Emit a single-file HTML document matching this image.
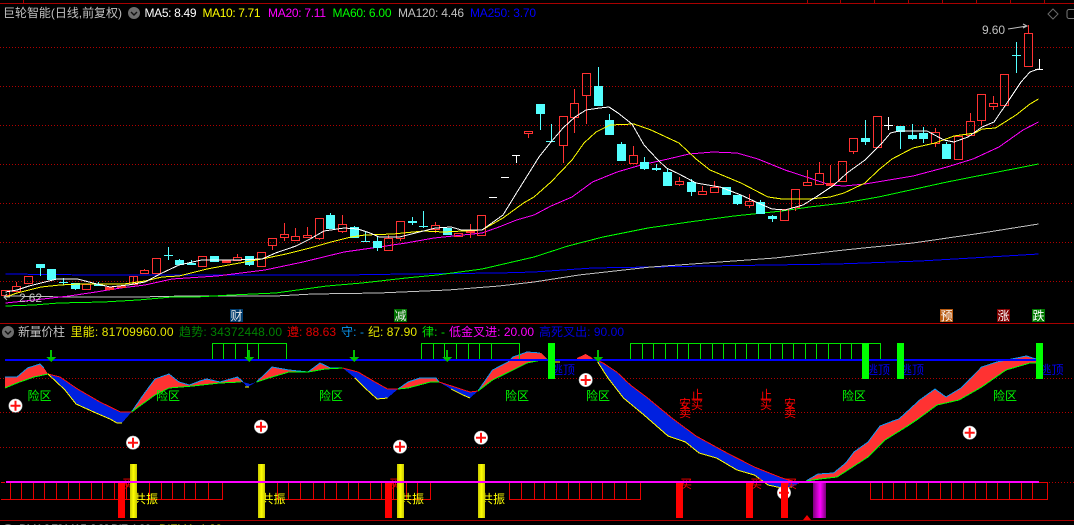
<!DOCTYPE html>
<html><head><meta charset="utf-8"><title>K</title>
<style>
html,body{margin:0;padding:0;background:#000;width:1074px;height:525px;overflow:hidden}
svg{display:block}
text{font-family:"Liberation Sans","WenQuanYi Zen Hei","Noto Sans CJK SC",sans-serif;font-size:12px}
</style></head><body>
<svg width="1074" height="525" viewBox="0 0 1074 525" xmlns="http://www.w3.org/2000/svg">
<rect width="1074" height="525" fill="#000"/>
<g shape-rendering="crispEdges">
<path d="M0 3.5H1074M23.5 0V3M807.5 0V3M840.5 0V3M874.5 0V3M908.5 0V3M942.5 0V3M976.5 0V3M1010.5 0V3M1044.5 0V3M0 323.5H1074M0 520.5H1074" stroke="#a80000" fill="none"/>
<path d="M0 47.5H1074M0 86.5H1074M0 125.5H1074M0 164.5H1074M0 203.5H1074M0 242.5H1074M0 281.5H1074M0 378.5H1074M0 412.5H1074M0 447.5H1074M1040 482.5H1074" stroke="#b00000" stroke-dasharray="1 2" fill="none"/>
</g>

<!-- MA lines -->
<g fill="none" shape-rendering="crispEdges">
<polyline stroke="#0000ff" points="5.5,274 93,275 275.5,275 344,275 406,274 499,273 534,272 592.5,268 651,267 706,266 837,264 920,261 989,257 1038.5,254"/>
<polyline stroke="#c0c0c0" points="5.5,296 69,297 138,297 186,296 275.5,296 313,294 379,293 448,290 499,286 534,282 579,275 651,267 706,263 775,258 844,250 913,243 982,233 1038.5,224"/>
<polyline stroke="#00ff00" points="5.5,306 34,305 58.5,303 103,302 138,300 172,297 196,297 231,295 275.5,293 327,286 362,283 406,278 437,275 482,269 534,257 568,246 603,237 648,228 689,222 734,216 782,211 809.5,207 844,203 878.5,197 947,182 1038.5,164"/>
<polyline stroke="#ff00ff" points="5.5,303 34,300 69,296 96,292 120.5,288 145,285 172,279 217,276 265,270 303,262 344,252 379,247 406,243 434,238 482,233 499,227 516.5,220 534,215 551,206 572,197 592.5,182 617,172 641,165 668,159 689,154 713,152 737,153 758,159 785,170 809.5,178 830,185 844,186 865,184 913,176 947,167 973,159 999,147 1023,130 1038.5,122"/>
</g>

<!-- candles: red hollow -->
<g fill="none" stroke="#ff3232" shape-rendering="crispEdges">
<path d="M16.5 282V286M28.5 283V284M144.5 269V270M144.5 273V274M237.5 254V257M272.5 245V250M284.5 223V234M284.5 237V241M295.5 228V236M307.5 227V235M319.5 238V240M342.5 215V224M342.5 231V233M388.5 235V238M388.5 250V251M400.5 238V241M435.5 222V225M435.5 229V233M470.5 224V238M133.5 276V285M528.5 133V138M563.5 145V163M574.5 89V103M574.5 117V133M586.5 95V124M633.5 146V155M633.5 163V164M679.5 177V181M679.5 184V186M702.5 186V191M714.5 181V187M749.5 194V201M749.5 205V208M795.5 207V211M807.5 170V182M819.5 162V173M830.5 165V183M853.5 151V154M935.5 128V132M935.5 143V147M970.5 113V121M981.5 120V125M993.5 96V103M993.5 106V110M1028.5 25V33"/>
<rect x="1.5" y="290.5" width="8" height="5"/><rect x="12.5" y="286.5" width="8" height="5"/><rect x="24.5" y="276.5" width="8" height="7"/><rect x="82.5" y="284.5" width="8" height="5"/><rect x="129.5" y="276.5" width="8" height="8"/><rect x="140.5" y="270.5" width="8" height="3"/><rect x="152.5" y="258.5" width="8" height="15"/><rect x="198.5" y="256.5" width="8" height="10"/><rect x="233.5" y="257.5" width="8" height="3"/><rect x="257.5" y="252.5" width="8" height="14"/><rect x="268.5" y="238.5" width="8" height="7"/><rect x="280.5" y="234.5" width="8" height="3"/><rect x="291.5" y="236.5" width="8" height="4"/><rect x="303.5" y="235.5" width="8" height="2"/><rect x="315.5" y="218.5" width="8" height="20"/><rect x="338.5" y="224.5" width="8" height="7"/><rect x="384.5" y="238.5" width="8" height="12"/><rect x="396.5" y="221.5" width="8" height="17"/><rect x="431.5" y="225.5" width="8" height="4"/><rect x="454.5" y="233.5" width="8" height="3"/><rect x="477.5" y="215.5" width="8" height="20"/><rect x="524.5" y="131.5" width="8" height="2"/>
<rect x="559.5" y="116.5" width="8" height="29"/><rect x="570.5" y="103.5" width="8" height="14"/><rect x="582.5" y="73.5" width="8" height="22"/><rect x="629.5" y="155.5" width="8" height="8"/><rect x="675.5" y="181.5" width="8" height="3"/><rect x="698.5" y="191.5" width="8" height="3"/><rect x="710.5" y="187.5" width="8" height="5"/><rect x="745.5" y="201.5" width="8" height="4"/><rect x="780.5" y="209.5" width="8" height="11"/><rect x="791.5" y="189.5" width="8" height="18"/><rect x="803.5" y="182.5" width="8" height="3"/><rect x="815.5" y="173.5" width="8" height="11"/><rect x="838.5" y="161.5" width="8" height="20"/><rect x="849.5" y="138.5" width="8" height="13"/><rect x="873.5" y="116.5" width="8" height="31"/><rect x="931.5" y="132.5" width="8" height="11"/><rect x="954.5" y="136.5" width="8" height="23"/><rect x="966.5" y="121.5" width="8" height="14"/><rect x="977.5" y="94.5" width="8" height="26"/><rect x="989.5" y="103.5" width="8" height="3"/><rect x="1000.5" y="74.5" width="8" height="31"/><rect x="1024.5" y="33.5" width="8" height="33"/>
</g>
<g fill="#ff3232" shape-rendering="crispEdges">
<rect x="105" y="287" width="9" height="3"/><rect x="117" y="286" width="9" height="2"/><rect x="222" y="260" width="9" height="3"/><rect x="826" y="183" width="9" height="3"/><rect x="466" y="231" width="9" height="2"/>
</g>
<!-- candles: cyan -->
<g fill="#54ffff" shape-rendering="crispEdges">
<rect x="36" y="264" width="9" height="4"/><rect x="47" y="269" width="9" height="11"/><rect x="71" y="283" width="9" height="6"/><rect x="94" y="284" width="9" height="2"/><rect x="175" y="260" width="9" height="5"/><rect x="187" y="263" width="9" height="2"/><rect x="210" y="256" width="9" height="6"/><rect x="245" y="256" width="9" height="9"/><rect x="326" y="215" width="9" height="14"/><rect x="350" y="227" width="9" height="11"/><rect x="373" y="241" width="9" height="7"/><rect x="408" y="221" width="9" height="2"/><rect x="443" y="228" width="9" height="7"/>
<rect x="536" y="104" width="9" height="10"/><rect x="594" y="86" width="9" height="20"/><rect x="605" y="120" width="9" height="15"/><rect x="617" y="144" width="9" height="17"/><rect x="640" y="162" width="9" height="7"/><rect x="652" y="168" width="9" height="2"/><rect x="663" y="172" width="9" height="14"/><rect x="687" y="182" width="9" height="10"/><rect x="722" y="187" width="9" height="8"/><rect x="733" y="195" width="9" height="9"/><rect x="756" y="202" width="9" height="12"/><rect x="768" y="216" width="9" height="3"/><rect x="861" y="138" width="9" height="4"/><rect x="896" y="126" width="9" height="6"/><rect x="908" y="135" width="9" height="4"/><rect x="919" y="133" width="9" height="6"/><rect x="942" y="144" width="9" height="15"/>
</g>
<path shape-rendering="crispEdges" fill="none" stroke="#54ffff" d="M40.5 268V276M59 282.5H68M63.5 278V285M75.5 289V290M98.5 282V284M168 255.5H173M164 255.5H172M168.5 247V260M179.5 259V260M191.5 260V263M249.5 265V266M330.5 213V215M354.5 226V227M361 241.5H370M365.5 232V242M377.5 236V241M377.5 248V251M408 221.5H417M412.5 217V225M419 226.5H428M423.5 211V228M540.5 114V130M546 141.5H555M551.5 124V141M598.5 67V86M609.5 114V120M621.5 142V144M644.5 157V162M644.5 169V170M656.5 164V171M667.5 169V172M691.5 179V182M691.5 192V196M737.5 204V205M760.5 200V202M772.5 215V222M865.5 120V138M865.5 142V145M900.5 132V149M912.5 124V135M912.5 139V140M923.5 127V133M923.5 139V143M946.5 142V144M1012 55.5H1021M1016.5 42V73"/>
<path shape-rendering="crispEdges" fill="none" stroke="#ffffff" d="M489 197.5H497M501 177.5H509M512 155.5H520M516.5 155V163M884 125.5H893M888.5 117V130M1035 69.5H1043M1039.5 59V69"/>

<g fill="none" shape-rendering="crispEdges">
<polyline stroke="#ffff00" points="5.5,297 17,293 41,287 60,285 79,284 103,284 124,284 145,281 162,277 179,276 207,269 234,264 262,259 286,254 310,248 331,242 351,237 365,235 393,234 423.5,231 444,232 482,230 503,218 523.5,203 534,197 551,182 572,160 584,143 596,132 610,125 634,124 651,130 679,143 696,159 710,170 741,183 768,197 782,199 809.5,199 830,197 844,193 865,183 878.5,170 892,159 913,148 935,143 954,136 975,133 982,129 995.5,128 1016,115 1030,104 1038.5,99"/>
<polyline stroke="#ffffff" points="5.5,292 17,290 29,286 41,283 57,279 77.5,279 93,283 110,287 128,285 145,282 162,273 179,265 201.5,260 234,260 262,259 275.5,253 296,246 310,239 324,231 344,228 358,229 370,233 379,237 399.5,237 423.5,231 435.5,228 451,227 461.5,230 482,230 503,215 516.5,193 529,173 539,157 551,142 563,128 575,117 586,110 599.5,108 609,107 618,113 632,124 644,145 658,160 666.5,168 679,174 696,183 720,187 741,195 758,203 772,209 785,210 803,205 816,197 834,185 847,173 865,160 882,143 890.5,133 899,131 927,131 944,140 954,142 968,137 982,127 994,122 1009,100 1021,82 1030,72 1038.5,69"/>
</g>

<!-- main labels -->
<text x="19" y="302" fill="#c0c0c0" textLength="23" lengthAdjust="spacing">2.62</text>
<path d="M10 297H4M7 294L4 297L7 300" stroke="#c0c0c0" fill="none"/>
<text x="982" y="34" fill="#c0c0c0" textLength="23" lengthAdjust="spacing">9.60</text>
<path d="M1008 29L1027 26M1023 24L1027 26L1023 28" stroke="#c0c0c0" fill="none"/>
<g shape-rendering="crispEdges">
<rect x="230" y="309" width="13" height="13" fill="#003c6e"/><rect x="394" y="309" width="13" height="13" fill="#007000"/><rect x="940" y="309" width="13" height="13" fill="#b85a10"/><rect x="997" y="309" width="13" height="13" fill="#800000"/><rect x="1032" y="309" width="13" height="13" fill="#007800"/>
</g>
<text x="230.5" y="320" fill="#e8e8e8">财</text><text x="394.5" y="320" fill="#e8e8e8">减</text><text x="940.5" y="320" fill="#fff">预</text><text x="997.5" y="320" fill="#fff">涨</text><text x="1032.5" y="320" fill="#fff">跌</text>

<!-- header -->
<text x="3" y="17" fill="#c0c0c0" textLength="119" lengthAdjust="spacing">巨轮智能(日线,前复权)</text>
<circle cx="134" cy="13" r="6" fill="#6e6e6e"/><path d="M131 12L134 15L137 12" stroke="#111" stroke-width="1.4" fill="none"/>
<text x="144.5" y="17" fill="#fff" textLength="52" lengthAdjust="spacing">MA5: 8.49</text>
<text x="202.5" y="17" fill="#ffff00" textLength="58" lengthAdjust="spacing">MA10: 7.71</text>
<text x="268" y="17" fill="#ff00ff" textLength="58" lengthAdjust="spacing">MA20: 7.11</text>
<text x="332.5" y="17" fill="#00ff00" textLength="59" lengthAdjust="spacing">MA60: 6.00</text>
<text x="398" y="17" fill="#c0c0c0" textLength="66" lengthAdjust="spacing">MA120: 4.46</text>
<text x="470" y="17" fill="#0000ff" textLength="66" lengthAdjust="spacing">MA250: 3.70</text>
<path d="M1053 9L1058 14L1053 19L1048 14Z" stroke="#6a6a6a" fill="none"/>
<rect x="1067" y="9.5" width="10" height="9" rx="2" stroke="#7a7a7a" fill="none"/>

<!-- panel 2 header -->
<circle cx="8" cy="332" r="6" fill="#6e6e6e"/><path d="M5 331L8 334L11 331" stroke="#111" stroke-width="1.4" fill="none"/>
<text x="18" y="336" fill="#c0c0c0" textLength="47" lengthAdjust="spacing">新量价柱</text>
<text x="70.5" y="336" fill="#e6e600" textLength="103" lengthAdjust="spacing">里能: 81709960.00</text>
<text x="179" y="336" fill="#008000" textLength="103" lengthAdjust="spacing">趋势: 34372448.00</text>
<text x="287" y="336" fill="#e00000" textLength="49" lengthAdjust="spacing">遵: 88.63</text>
<text x="341" y="336" fill="#0a96f0" textLength="23" lengthAdjust="spacing">守: -</text>
<text x="368" y="336" fill="#e6e600" textLength="49" lengthAdjust="spacing">纪: 87.90</text>
<text x="422" y="336" fill="#00e000" textLength="23" lengthAdjust="spacing">律: -</text>
<text x="449" y="336" fill="#ff00ff" textLength="85" lengthAdjust="spacing">低金叉进: 20.00</text>
<text x="539" y="336" fill="#0000e0" textLength="85" lengthAdjust="spacing">高死叉出: 90.00</text>

<!-- bands -->
<g shape-rendering="crispEdges">
<g fill="#ff3232">
<path d="M5 377L17 377L27.5 368L40 364L44 368L48 374L34 377L17 383L5 388Z"/>
<path d="M131.5 412L144.6 393L155 379L169 374L179 382L189.4 385L200 381L206.6 379L220 382L237.6 377L243 382L220 383L193 386L169 388L155 395Z"/>
<path d="M256.6 382L272 367L289 370L308 372L320 363L330.6 368L342.7 368L325.5 369L308 372L289 372L272 377Z"/>
<path d="M398 389L408 382L420 378L436 378L439 382L430.5 382L408 388Z"/>
<path d="M478 391L492.5 370L508 362L513 357L527 352L534 352L541 353L547 359L536.6 361L527 363L513 370L492.5 380Z"/>
<path d="M577 358L585.7 354L592.5 358V360H577Z"/>
<path d="M806 481L818 474L833.6 473L845.7 463L854 452L868 442L880 426L895.6 420L899 419L919.7 400L935 389L946 397L961 388L981.7 367L997 362L1026.5 356L1036 359L1036 363L1030 363L1006 370L981.7 387L959 400L937 405L918 419L906 427L885 440L868 457L852.6 467L837 477L820 479Z"/>
</g>
<g fill="#0020e0">
<path d="M48 374L60 377L77.5 389L100 402L120.5 412L131.5 412L122 423L117 423L110 419L96 413L76 404L65 390Z"/>
<path d="M243 382L250 384L256.6 382L247 387Z"/>
<path d="M342.7 368L358 372L375 382L387.5 389L398 389L387.5 398L377 399L365 388L355 378Z"/>
<path d="M439 382L454.6 387L470 392L478 391L470 398L463 395L451 389Z"/>
<path d="M594 359L603 363L616.7 372L630.4 385L647.6 398L671.8 418L696 436L727 453L754.4 467L782 478L799 483L792 487L782 488L768 485L754.4 475L737 470L716.5 458L699 453L685.5 442L668 436L644 415L623.5 398L608 378L597.7 362Z"/>
</g>
<g fill="none" stroke="#1496f0">
<polyline points="5,377 17,377 27.5,368 40,364 44,368"/><polyline points="131.5,412 144.6,393 155,379 169,374 179,382 189.4,385 200,381 206.6,379 220,382 237.6,377 243,382"/><polyline points="256.6,382 272,367 289,370 308,372 320,363 330.6,368 342.7,368"/><polyline points="398,389 408,382 420,378 436,378 439,382"/><polyline points="478,391 492.5,370 508,362 513,357 527,352 540,353"/><polyline points="806,481 818,474 833.6,473 845.7,463 854,452 868,442 880,426 895.6,420 899,419 919.7,400 935,389 946,397 961,388 981.7,367 997,362 1026.5,356 1036,359"/>
</g>
<g fill="none" stroke="#00ff00">
<polyline points="5,388 17,383 34,377 48,374"/><polyline points="131.5,412 155,395 169,388 193,386 220,383 241,382"/><polyline points="256.6,382 272,377 289,372 308,372 325.5,369 342.7,368"/><polyline points="398,389 408,388 430.5,382 439,382"/><polyline points="478,391 492.5,380 513,370 527,363 536.6,361 547,359"/><polyline points="806,481 820,479 837,477 852.6,467 868,457 885,440 906,427 918,419 937,405 959,400 981.7,387 1006,370 1030,363 1036,363"/>
</g>
<g fill="none" stroke="#ff1010">
<polyline points="48,374 60,377 77.5,389 100,402 120.5,412 131.5,412"/><polyline points="342.7,368 358,372 375,382 387.5,389 398,389"/><polyline points="439,382 454.6,387 470,392 478,391"/><polyline points="594,359 603,363 616.7,372 630.4,385 647.6,398 671.8,418 696,436 727,453 754.4,467 782,478 799,483"/>
</g>
<g fill="none" stroke="#ffff00">
<polyline points="48,374 65,390 76,404 96,413 110,419 117,423 122,423"/><path d="M245 387H249M555 362H560"/><polyline points="355,378 365,388 377,399 387.5,398"/><polyline points="451,389 463,395 470,398"/><polyline points="597.7,362 608,378 623.5,398 644,415 668,436 685.5,442 699,453 716.5,458 737,470 754.4,475 768,485 782,488 792,487"/>
</g>

<!-- green combs -->
<path fill="none" stroke="#00e000" d="M212.5 359V343.5H286.5V359M223.5 343V359M235.5 343V359M247.5 343V359M258.5 343V359M421.5 359V343.5H519.5V359M433.5 343V359M444.5 343V359M456.5 343V359M468.5 343V359M479.5 343V359M491.5 343V359M630.5 359V343.5H880.5V359M642.5 343V359M653.5 343V359M665.5 343V359M677.5 343V359M688.5 343V359M700.5 343V359M712.5 343V359M723.5 343V359M735.5 343V359M746.5 343V359M758.5 343V359M770.5 343V359M782.5 343V359M793.5 343V359M805.5 343V359M816.5 343V359M828.5 343V359M840.5 343V359M851.5 343V359"/>
<rect x="5" y="359" width="1031" height="2" fill="#0000ff"/>
<g fill="#00c000">
<path d="M50 350H52V357H56L51 362L46 357H50Z"/><path d="M248 350H250V357H254L249 362L244 357H248Z"/><path d="M353 350H355V357H359L354 362L349 357H353Z"/><path d="M446 350H448V357H452L447 362L442 357H446Z"/><path d="M597 350H599V357H603L598 362L593 357H597Z"/>
</g>
</g>

<!-- panel 2 labels -->
<g fill="#00ff00">
<text x="27.5" y="400">险区</text><text x="156" y="400">险区</text><text x="319" y="400">险区</text><text x="505" y="400">险区</text><text x="586" y="400">险区</text><text x="842" y="400">险区</text><text x="993" y="400">险区</text>
</g>
<g fill="#0000f0">
<text x="551" y="374">逃顶</text><text x="866" y="374">逃顶</text><text x="900" y="374">逃顶</text><text x="1039.5" y="374">逃顶</text>
</g>
<g fill="#ff0000">
<text x="679" y="408">安</text><text x="679" y="417">卖</text>
<text x="691" y="399">止</text><text x="691" y="409">买</text>
<text x="760" y="399">止</text><text x="760" y="409">买</text>
<text x="784" y="408">安</text><text x="784" y="417">卖</text>
<text x="122" y="488">买</text><text x="389" y="488">买</text><text x="680" y="488">买</text><text x="750" y="488">买</text><text x="785" y="488">买</text>
</g>

<!-- green bars -->
<g fill="#00ff00" shape-rendering="crispEdges">
<rect x="548" y="343" width="7" height="36"/><rect x="862" y="343" width="7" height="36"/><rect x="897" y="343" width="7" height="36"/><rect x="1036" y="343" width="7" height="36"/>
</g>

<!-- red combs -->
<path shape-rendering="crispEdges" fill="none" stroke="#e80000" d="M1 482.5H5M1 499.5H222.5V482M10.5 482V499M21.5 482V499M33.5 482V499M44.5 482V499M56.5 482V499M68.5 482V499M79.5 482V499M91.5 482V499M102.5 482V499M114.5 482V499M126.5 482V499M149.5 482V499M161.5 482V499M172.5 482V499M184.5 482V499M195.5 482V499M208.5 482V499M277.5 482V499.5H430.5V482M288.5 482V499M300.5 482V499M313.5 482V499M324.5 482V499M336.5 482V499M348.5 482V499M358.5 482V499M370.5 482V499M381.5 482V499M393.5 482V499M406.5 482V499M417.5 482V499M509.5 482V499.5H640.5V482M521.5 482V499M534.5 482V499M544.5 482V499M556.5 482V499M568.5 482V499M579.5 482V499M591.5 482V499M602.5 482V499M614.5 482V499M626.5 482V499M870.5 482V499.5H1047.5V482.5H1039M882.5 482V499M893.5 482V499M905.5 482V499M916.5 482V499M928.5 482V499M940.5 482V499M951.5 482V499M963.5 482V499M975.5 482V499M986.5 482V499M997.5 482V499M1009.5 482V499M1021.5 482V499M1032.5 482V499"/>

<!-- plus icons -->
<g>
<g fill="#fff" stroke="#999" stroke-width="0.5">
<circle cx="15.5" cy="405.7" r="6.8"/><circle cx="585.7" cy="380" r="6.8"/><circle cx="133" cy="442.7" r="6.8"/><circle cx="261" cy="426.7" r="6.8"/><circle cx="400" cy="446.7" r="6.8"/><circle cx="481" cy="437.7" r="6.8"/><circle cx="784" cy="492.7" r="6.8"/><circle cx="969.7" cy="432.7" r="6.8"/>
</g>
<path stroke="#ff1010" stroke-width="2" fill="none" d="M10.5 405.7h10M15.5 400.7v10M580.7 380h10M585.7 375v10M128 442.7h10M133 437.7v10M256 426.7h10M261 421.7v10M395 446.7h10M400 441.7v10M476 437.7h10M481 432.7v10M779 492.7h10M784 487.7v10M964.7 432.7h10M969.7 427.7v10"/>
</g>

<defs>
<linearGradient id="y"><stop offset="0" stop-color="#c8c800"/><stop offset=".5" stop-color="#ffff00"/><stop offset="1" stop-color="#c8c800"/></linearGradient>
<linearGradient id="m"><stop offset="0" stop-color="#7a007a"/><stop offset=".55" stop-color="#ff00ff"/><stop offset="1" stop-color="#7a007a"/></linearGradient>
</defs>
<g shape-rendering="crispEdges">
<g fill="#ff0000">
<rect x="118" y="482" width="7" height="36"/><rect x="385" y="482" width="7" height="36"/><rect x="676" y="482" width="7" height="36"/><rect x="746" y="482" width="7" height="36"/><rect x="781" y="482" width="7" height="36"/>
</g>
<rect x="813" y="482" width="13" height="36" fill="url(#m)"/>
</g>
<g fill="#ffff00">
<text x="134" y="503">共振</text><text x="261.5" y="503">共振</text><text x="400" y="503">共振</text><text x="481" y="503">共振</text>
</g>
<g shape-rendering="crispEdges">
<rect x="130" y="464" width="7" height="54" fill="url(#y)"/><rect x="258" y="464" width="7" height="54" fill="url(#y)"/><rect x="397" y="464" width="7" height="54" fill="url(#y)"/><rect x="478" y="464" width="7" height="54" fill="url(#y)"/>
<rect x="6" y="481" width="1033" height="2" fill="#ff00ff"/>
</g>
<path d="M803 520L807 515L811 520Z" fill="#f00000"/>

<!-- bottom cropped row -->
<circle cx="8" cy="530" r="6" fill="#6e6e6e"/>
<text x="19" y="533" fill="#c0c0c0" textLength="132" lengthAdjust="spacing">DMA 8.73 MA5: 8.88 DIF: 1.26</text>
<text x="159" y="533" fill="#e6e600" textLength="63" lengthAdjust="spacing">DIFMA: 1.22</text>
</svg>
</body></html>
